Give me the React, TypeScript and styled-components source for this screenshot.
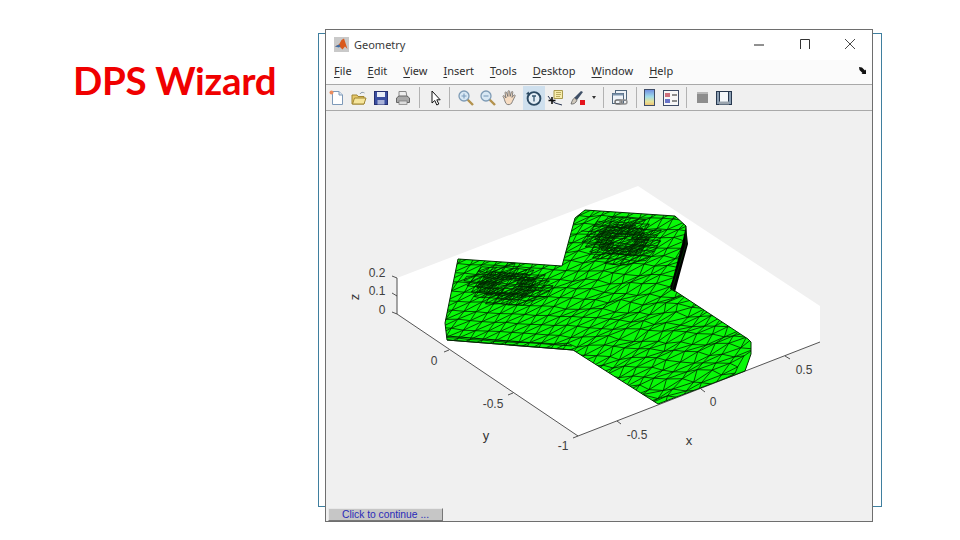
import React, { useMemo } from "react";
import styled, { createGlobalStyle } from "styled-components";

const Global = createGlobalStyle`
  html, body { margin: 0; padding: 0; background: #fff; }
  #root { width: 960px; height: 540px; overflow: hidden; }
`;

const Page = styled.div`
  width: 960px;
  height: 540px;
  box-sizing: border-box;
  padding: 29px 0 0 73px;
  display: flex;
  background: #fff;
`;

const SlideTitle = styled.h1`
  width: 252px;
  margin: 25px 0 0;
  flex: none;
  font: 700 38.5px/52px Lato, "Liberation Sans", sans-serif;
  letter-spacing: -0.3px;
  color: #f00000;
  white-space: nowrap;
`;

const WindowStage = styled.div`
  position: relative;
  width: 548px;
  height: 493px;
`;

const BackFrame = styled.div`
  position: absolute;
  left: -7px;
  top: 4px;
  width: 564px;
  height: 474px;
  box-sizing: border-box;
  border: 1px solid #3f7f9f;
`;

const FigureWindow = styled.div`
  position: relative;
  width: 548px;
  height: 493px;
  box-sizing: border-box;
  border: 1px solid #6e6e6e;
  background: #f0f0f0;
  display: flex;
  flex-direction: column;
`;

const TitleBar = styled.div`
  height: 30px;
  flex: none;
  box-sizing: border-box;
  background: #fff;
  display: flex;
  align-items: center;
  padding: 0 0 2px 8px;
`;

const WindowName = styled.span`
  margin-left: 5px;
  font: 400 11px "Noto Sans", sans-serif;
  color: #3a3a3a;
  flex: 1;
`;

const WindowButton = styled.svg<{ $last?: boolean }>`
  width: 12px;
  height: 12px;
  margin-right: ${(p) => (p.$last ? 16 : 33)}px;
  margin-left: ${(p) => (p.$last ? 0 : 1)}px;
  flex: none;
`;

const MenuBar = styled.div`
  height: 25px;
  flex: none;
  background: #fbfbfb;
  display: flex;
  align-items: center;
  gap: 16px;
  padding: 0 0 3px 8px;
  box-sizing: border-box;
  border-bottom: 1px solid #a9a9a9;
  font: 400 11px "Noto Sans", sans-serif;
  color: #2e2e2e;
`;

const MenuItem = styled.span`
  white-space: nowrap;
  u { text-underline-offset: 2px; text-decoration-thickness: 1px; }
`;

const MenuDock = styled.svg`
  width: 9px;
  height: 9px;
  margin-left: auto;
  margin-right: 5px;
`;

const ToolBar = styled.div`
  height: 25px;
  flex: none;
  display: flex;
  align-items: center;
  background: #f0f0f0;
  border-bottom: 1px solid #a9a9a9;
`;

const ToolButton = styled.div<{ $active?: boolean }>`
  width: 22px;
  height: 24px;
  flex: none;
  display: flex;
  align-items: center;
  justify-content: center;
  background: ${(p) => (p.$active ? "#cfe0ee" : "transparent")};
`;

const ToolSeparator = styled.div<{ $left?: number; $right?: number }>`
  width: 1px;
  height: 21px;
  flex: none;
  background: #b2b2b2;
  margin: 0 ${(p) => p.$right ?? 5}px 0 ${(p) => p.$left ?? 5}px;
`;

const ToolGap = styled.div<{ $width: number }>`
  width: ${(p) => p.$width}px;
  flex: none;
`;

const DropArrow = styled.div`
  width: 10px;
  flex: none;
  display: flex;
  justify-content: center;
  &::before {
    content: "";
    border-left: 2.5px solid transparent;
    border-right: 2.5px solid transparent;
    border-top: 3px solid #333;
  }
`;

const Figure = styled.div`
  flex: 1;
  min-height: 0;
  display: flex;
  flex-direction: column;
  background: #f0f0f0;
`;

const PlotSvg = styled.svg`
  width: 546px;
  height: 397px;
  flex: none;
  display: block;
`;

const ContinueButton = styled.div`
  width: 115px;
  height: 13px;
  margin-left: 2px;
  box-sizing: border-box;
  background: #c6c6c6;
  border-top: 1px solid #e8e8e8;
  border-left: 1px solid #e8e8e8;
  border-right: 1px solid #777;
  border-bottom: 1px solid #777;
  font: 400 10.3px/12px "Liberation Sans", sans-serif;
  color: #2a2ab8;
  text-align: center;
  white-space: nowrap;
`;

const Icon: React.FC<{ children: React.ReactNode }> = ({ children }) => (
  <svg width="18" height="18" viewBox="0 0 18 18" fill="none">
    {children}
  </svg>
);

const OUTLINE: [number, number][] = [
  [458, 258], [562, 265], [575, 217], [585, 209], [675, 215], [686, 225], [686, 243],
  [672, 288], [748, 338], [751, 341], [751, 353], [745, 370], [658, 403], [573, 349],
  [447, 339], [445, 322],
];

type Pt = [number, number];
type Patch = { x: number; y: number; rx: number; ry: number; inner: number };

function buildMesh(): string {
  let seed = 1234567;
  const rnd = () => {
    seed = (seed * 16807) % 2147483647;
    return seed / 2147483647 - 0.5;
  };
  const seg = (a: Pt, b: Pt) =>
    `M${a[0].toFixed(1)} ${a[1].toFixed(1)}L${b[0].toFixed(1)} ${b[1].toFixed(1)}`;

  const grid = (
    x0: number, y0: number, cols: number, rows: number, w: number, h: number,
    jitter: (x: number, y: number) => number,
    keep: (x: number, y: number) => boolean,
  ) => {
    const pts: Pt[][] = [];
    for (let j = 0; j < rows; j++) {
      const row: Pt[] = [];
      for (let i = 0; i < cols; i++) {
        const x = x0 + i * w + j * w * 0.5 * -1;
        const y = y0 + j * h + i * w * 0.06;
        const k = jitter(x, y);
        row.push([x + rnd() * k, y + rnd() * k]);
      }
      pts.push(row);
    }
    let d = "";
    for (let j = 0; j < rows; j++) {
      for (let i = 0; i < cols; i++) {
        const p = pts[j][i];
        if (!keep(p[0], p[1])) continue;
        if (i + 1 < cols && keep(pts[j][i + 1][0], pts[j][i + 1][1])) d += seg(p, pts[j][i + 1]);
        if (j + 1 < rows && keep(pts[j + 1][i][0], pts[j + 1][i][1])) d += seg(p, pts[j + 1][i]);
        if (j + 1 < rows && i + 1 < cols && keep(pts[j + 1][i][0], pts[j + 1][i][1]) && keep(pts[j][i + 1][0], pts[j][i + 1][1]))
          d += seg(pts[j][i + 1], pts[j + 1][i]);
      }
    }
    return d;
  };

  const patches: Patch[] = [
    { x: 507, y: 284, rx: 31, ry: 15, inner: 0.3 },
    { x: 622, y: 239, rx: 29, ry: 17, inner: 0.3 },
  ];
  const norm = (p: Patch, x: number, y: number) => Math.hypot((x - p.x) / p.rx, (y - p.y) / p.ry);

  // base mesh: large triangles, more irregular out along the right arm
  let d = grid(
    440, 196, 34, 25, 12, 9,
    (x, y) => (x > 600 && y > 280 ? 5 : x > 565 ? 3.5 : 1.4),
    () => true,
  );
  // medium refinement around the two pads and along the top faces
  for (const p of patches) {
    const big: Patch = { ...p, rx: p.rx * 1.5, ry: p.ry * 1.5 };
    d += grid(p.x - 40, p.y - 30, 22, 14, 7.5, 5, () => 1.4, (x, y) => norm(big, x, y) < 1);
    d += grid(p.x - 30, p.y - 24, 28, 16, 4.4, 3.2, () => 0.9, (x, y) => {
      const t = norm(p, x, y);
      return t < 1 && t > p.inner;
    });
  }
  return d;
}

const Label: React.FC<{ x: number; y: number; children: React.ReactNode }> = ({ x, y, children }) => (
  <text x={x} y={y} textAnchor="middle" fontFamily="'Liberation Sans', sans-serif" fontSize="12" fill="#404040">
    {children}
  </text>
);

const Plot: React.FC = () => {
  const mesh = useMemo(buildMesh, []);
  const outline = OUTLINE.map((p) => p.join(",")).join(" ");
  const ticks = [
    "M397 277L392 275", "M397 295L392 292", "M397 313L392 311",
    "M449 349L444 351", "M513 392L508 394", "M578 435L573 437",
    "M617 420L621 423", "M701 388L705 391", "M785 355L790 358",
  ];
  return (
    <PlotSvg viewBox="326 110 546 397">
      <polygon points="397,277 638,185 820,305 820,341 578,435 397,313" fill="#fff" />
      <path d="M397 313L578 435L820 341" stroke="#2b2b2b" strokeWidth="0.8" fill="none" />
      <path d="M397 277V313" stroke="#6b6b6b" strokeWidth="1.2" fill="none" />
      <path d={ticks.join("")} stroke="#2b2b2b" strokeWidth="0.8" fill="none" />
      <clipPath id="meshClip">
        <polygon points={outline} />
      </clipPath>
      <polygon points={outline} fill="#08f808" />
      <g clipPath="url(#meshClip)">
        <path d={mesh} stroke="#032503" strokeWidth="0.8" fill="none" />
      </g>
      <polygon points="686,225 688,243 675,291 670,288 682,243" fill="#000" />
      <polygon points={outline} fill="none" stroke="#042a04" strokeWidth="1" />
      <path d="M447 339L573 349M447 335L572 345" stroke="#052a05" strokeWidth="1.2" fill="none" />
      <Label x={377} y={276}>0.2</Label>
      <Label x={377} y={294}>0.1</Label>
      <Label x={382} y={313}>0</Label>
      <text x={0} y={0} transform="translate(359 296) rotate(-90)" textAnchor="middle" fontFamily="'Liberation Sans', sans-serif" fontSize="13" fill="#333">z</text>
      <Label x={434} y={364}>0</Label>
      <Label x={493} y={407}>-0.5</Label>
      <text x={486} y={439} textAnchor="middle" fontFamily="'Liberation Sans', sans-serif" fontSize="13" fill="#333">y</text>
      <Label x={563} y={449}>-1</Label>
      <Label x={637} y={438}>-0.5</Label>
      <text x={689} y={444} textAnchor="middle" fontFamily="'Liberation Sans', sans-serif" fontSize="13" fill="#333">x</text>
      <Label x={713} y={405}>0</Label>
      <Label x={804} y={373}>0.5</Label>
    </PlotSvg>
  );
};

const MENU: [string, string][] = [
  ["F", "ile"], ["E", "dit"], ["V", "iew"], ["I", "nsert"], ["T", "ools"],
  ["D", "esktop"], ["W", "indow"], ["H", "elp"],
];

export default function App() {
  return (
    <Page>
      <Global />
      <SlideTitle>DPS Wizard</SlideTitle>
      <WindowStage>
        <BackFrame />
        <FigureWindow>
          <TitleBar>
            <svg width="15" height="15" viewBox="0 0 15 15">
              <rect width="15" height="15" fill="#c9c9c9" />
              <path d="M1 9.5L5 7.5L7.5 3L10 1.5L13.5 12L11 9.5L8.5 12.5L5.5 9.5Z" fill="#d9591c" />
              <path d="M1 9.5L5 7.5L6.5 9L5 10.5Z" fill="#3b6ea8" />
            </svg>
            <WindowName>Geometry</WindowName>
            <WindowButton viewBox="0 0 12 12">
              <path d="M1 7H11" stroke="#222" strokeWidth="1" />
            </WindowButton>
            <WindowButton viewBox="0 0 12 12">
              <path d="M1.5 11V1.5H10.5V11" stroke="#333" strokeWidth="1" fill="none" />
            </WindowButton>
            <WindowButton viewBox="0 0 12 12" $last>
              <path d="M1 1L11 11M11 1L1 11" stroke="#333" strokeWidth="0.9" />
            </WindowButton>
          </TitleBar>
          <MenuBar>
            {MENU.map(([a, b]) => (
              <MenuItem key={a}>
                <u>{a}</u>
                {b}
              </MenuItem>
            ))}
            <MenuDock viewBox="0 0 9 9">
              <path d="M1 1L4 1.5L7 4.5L8 3.5V8H3.5L4.5 7L1.5 4Z" fill="#111" />
            </MenuDock>
          </MenuBar>
          <ToolBar>
            <ToolButton>
              <Icon>
                <path d="M4.5 2.5H11L14.5 6V15.5H4.5Z" fill="#fff" stroke="#7d99b8" />
                <path d="M11 2.5V6H14.5" fill="#dbe6f2" stroke="#7d99b8" />
                <circle cx="3.5" cy="3.5" r="2" fill="#e98d5f" />
              </Icon>
            </ToolButton>
            <ToolButton>
              <Icon>
                <path d="M2 6H7L8 7.5H14V15H2Z" fill="#e9c96a" stroke="#a08633" />
                <path d="M2.5 15L4.5 9H16L14 15Z" fill="#f6e59b" stroke="#a08633" />
                <path d="M10 5C11 3 13 3 14.5 4" stroke="#8a9aaa" fill="none" />
              </Icon>
            </ToolButton>
            <ToolButton>
              <Icon>
                <rect x="2.5" y="2.5" width="13" height="13" fill="#3a4ea0" stroke="#252f70" />
                <rect x="5" y="3" width="8" height="5" fill="#e8edf7" />
                <rect x="5.5" y="11" width="7" height="4.5" fill="#aab3d8" />
              </Icon>
            </ToolButton>
            <ToolButton>
              <Icon>
                <path d="M5 2.5H12L13 8H5Z" fill="#eee" stroke="#888" />
                <path d="M2.5 9L5 7H13L15.5 9V13.5H2.5Z" fill="#a8a8a8" stroke="#666" />
                <rect x="5" y="12" width="8" height="3.5" fill="#ddd" stroke="#777" strokeWidth="0.7" />
              </Icon>
            </ToolButton>
            <ToolSeparator />
            <ToolButton>
              <Icon>
                <path d="M5 2V14L7.8 11.5L9.8 16L11.8 15L9.8 10.8H13.2Z" fill="#fff" stroke="#111" strokeWidth="1" />
              </Icon>
            </ToolButton>
            <ToolSeparator $left={2} />
            <ToolButton>
              <Icon>
                <path d="M10.5 10.5L16 16" stroke="#b3924e" strokeWidth="2.4" />
                <circle cx="7" cy="7" r="5" fill="#d8e8f4" stroke="#7f9cb6" strokeWidth="1.3" />
                <path d="M4.5 7H9.5M7 4.5V9.5" stroke="#7b9cbc" strokeWidth="1.1" />
              </Icon>
            </ToolButton>
            <ToolButton>
              <Icon>
                <path d="M10.5 10.5L16 16" stroke="#b3924e" strokeWidth="2.4" />
                <circle cx="7" cy="7" r="5" fill="#d8e8f4" stroke="#7f9cb6" strokeWidth="1.3" />
                <path d="M4.5 7H9.5" stroke="#7b9cbc" strokeWidth="1.1" />
              </Icon>
            </ToolButton>
            <ToolButton>
              <Icon>
                <path d="M3 9L2 7.5C1.8 6.6 3 6.2 3.6 7L5 9L4 3.8C4 2.8 5.3 2.6 5.6 3.6L6.9 7.5L7 2.4C7.2 1.4 8.5 1.4 8.6 2.4L9.2 7.4L10.4 3C10.8 2.1 12 2.4 11.8 3.4L11 8.4L12.8 6.2C13.5 5.5 14.6 6.2 14 7.2L11.4 12.5C10.7 15 9 15.8 7 15.6C5 15.4 4.2 13.5 3 9Z" fill="#f6dcc2" stroke="#666" strokeWidth="0.8" />
              </Icon>
            </ToolButton>
            <ToolGap $width={2} />
            <ToolButton $active>
              <Icon>
                <circle cx="9" cy="9.5" r="6.4" fill="#e4eef6" stroke="#2c4a63" strokeWidth="1.9" />
                <path d="M1 5L3.5 2.5L5 6.5Z" fill="#2c4a63" />
                <path d="M7 7H11M9 7V12.5" stroke="#34566f" strokeWidth="1.3" />
              </Icon>
            </ToolButton>
            <ToolButton>
              <Icon>
                <path d="M7 1.5H15.5V9.5H7Z" fill="#f7ecaa" stroke="#a99a4f" />
                <path d="M9 3.5H14M9 5.5H14M9 7.5H13" stroke="#a99a4f" strokeWidth="0.8" />
                <path d="M1 7L4 11L8 14L15 16" stroke="#26324f" strokeWidth="1" fill="none" />
                <path d="M5 8V15M1.5 11.5H8.5" stroke="#111" strokeWidth="1.6" />
              </Icon>
            </ToolButton>
            <ToolButton>
              <Icon>
                <path d="M5 9L12 2L14 3L8 11Z" fill="#3f4f66" />
                <path d="M2 15C3 12 4 9.5 5.5 9L8 11.2C7 14 4.5 15.5 2 15Z" fill="#cfc8bc" stroke="#555" strokeWidth="0.7" />
                <rect x="11" y="11" width="5" height="5" fill="#e4141c" />
              </Icon>
            </ToolButton>
            <DropArrow />
            <ToolSeparator $left={4} />
            <ToolButton>
              <Icon>
                <rect x="4.5" y="1.5" width="11" height="10" fill="#eef3f8" stroke="#50667c" />
                <rect x="1.5" y="4.5" width="11" height="10" fill="#eef3f8" stroke="#50667c" />
                <path d="M1.5 4.5H12.5V6.5H1.5Z" fill="#7b93ac" />
                <rect x="4" y="11" width="7" height="4" rx="2" fill="none" stroke="#6d6d6d" strokeWidth="1.4" />
                <rect x="9" y="11" width="7" height="4" rx="2" fill="none" stroke="#8f8f8f" strokeWidth="1.4" />
              </Icon>
            </ToolButton>
            <ToolSeparator $right={1} />
            <ToolButton>
              <svg width="11" height="17" viewBox="0 0 11 17">
                <defs>
                  <linearGradient id="cbar" x1="0" y1="0" x2="0" y2="1">
                    <stop offset="0" stopColor="#6f8ce0" />
                    <stop offset="0.45" stopColor="#a0dcea" />
                    <stop offset="0.75" stopColor="#e5e39a" />
                    <stop offset="1" stopColor="#f0c070" />
                  </linearGradient>
                </defs>
                <rect x="0.5" y="0.5" width="10" height="16" fill="url(#cbar)" stroke="#3e4c66" />
              </svg>
            </ToolButton>
            <ToolButton>
              <svg width="16" height="16" viewBox="0 0 16 16">
                <rect x="0.5" y="0.5" width="15" height="15" fill="#f7f7f7" stroke="#3e4c66" />
                <rect x="2" y="3" width="5" height="4" fill="#cf6f7d" />
                <rect x="2" y="9" width="5" height="4" fill="#6a74c8" />
                <path d="M9 5H14M9 11H14" stroke="#222" strokeWidth="1.2" />
              </svg>
            </ToolButton>
            <ToolSeparator $left={4} $right={4} />
            <ToolButton>
              <svg width="11" height="11" viewBox="0 0 11 11">
                <rect width="11" height="11" fill="#8d8d8d" />
                <rect x="0" y="0" width="11" height="2" fill="#b7b7b7" />
              </svg>
            </ToolButton>
            <ToolButton>
              <svg width="16" height="14" viewBox="0 0 16 14">
                <rect x="0.5" y="0.5" width="15" height="13" fill="#f5f8fb" stroke="#27384f" />
                <rect x="0.5" y="0.5" width="3" height="13" fill="#8da0b4" stroke="#27384f" />
                <rect x="12.5" y="0.5" width="3" height="13" fill="#8da0b4" stroke="#27384f" />
                <rect x="3" y="10.5" width="10" height="3" fill="#9aa4ae" />
              </svg>
            </ToolButton>
          </ToolBar>
          <Figure>
            <Plot />
            <ContinueButton>Click to continue ...</ContinueButton>
          </Figure>
        </FigureWindow>
      </WindowStage>
    </Page>
  );
}
